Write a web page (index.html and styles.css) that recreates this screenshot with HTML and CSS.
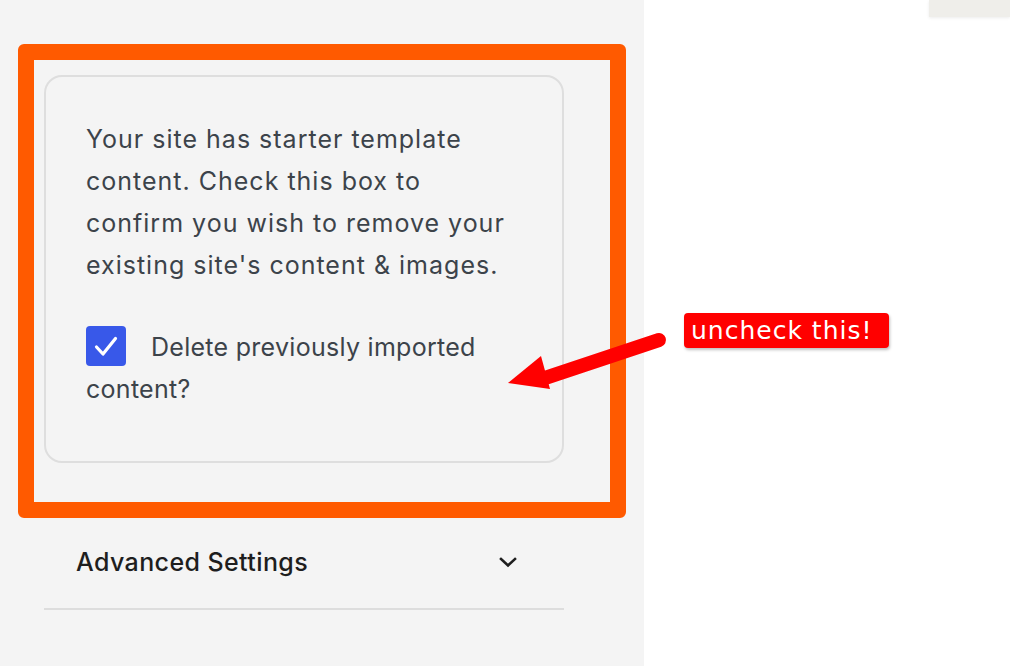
FILE: index.html
```html
<!DOCTYPE html>
<html>
<head>
<meta charset="utf-8">
<link rel="stylesheet" href="styles.css">
</head>
<body>
<div class="page">
  <aside class="sidebar">
    <div class="card">
      <p class="card-text">Your site has starter template content. Check this box to confirm you wish to remove your existing site's content &amp; images.</p>
      <label class="check-row"><span class="checkbox"><svg viewBox="0 0 40 40" width="40" height="40"><path d="M10.5 21 L17 28 L29.5 12.5" fill="none" stroke="#fff" stroke-width="3.2" stroke-linecap="round" stroke-linejoin="round"/></svg></span>Delete previously imported content?</label>
    </div>
    <div class="advanced">
      <span class="advanced-title">Advanced Settings</span>
      <svg class="chevron" viewBox="0 0 24 24" width="24" height="24"><path d="M5 9 L12 15.5 L19 9" fill="none" stroke="#1e1e1e" stroke-width="2.6" stroke-linecap="square"/></svg>
    </div>
  </aside>
  <main class="main">
    <div class="top-chip"></div>
  </main>
  <div class="frame"></div>
  <svg class="arrow" width="1010" height="666" viewBox="0 0 1010 666">
    <line x1="659" y1="340" x2="545" y2="378" stroke="#ff0000" stroke-width="14" stroke-linecap="round"/>
    <polygon points="508,383 541,356 550,389" fill="#ff0000"/>
  </svg>
  <div class="callout">uncheck this!</div>
</div>
</body>
</html>
```
FILE: styles.css
```css
html, body {
  margin: 0;
  padding: 0;
}
body {
  width: 1010px;
  height: 666px;
  overflow: hidden;
  background: #ffffff;
  font-family: Inter, "Noto Sans", "Liberation Sans", sans-serif;
}
.page {
  position: relative;
  display: flex;
  width: 1010px;
  height: 666px;
}
.sidebar {
  width: 644px;
  flex: none;
  background: #f4f4f4;
  padding: 75px 80px 0 44px;
  box-sizing: border-box;
}
.card {
  width: 520px;
  height: 388px;
  box-sizing: border-box;
  border: 2px solid #dedede;
  border-radius: 18px;
  padding: 41px 40px 0 40px;
}
.card-text {
  margin: 0;
  font-size: 25px;
  line-height: 42px;
  color: #3c434a;
  letter-spacing: 1px;
}
.check-row {
  display: block;
  margin-top: 40px;
  font-size: 25px;
  line-height: 42px;
  color: #3c434a;
  letter-spacing: 0.28px;
}
.checkbox {
  display: inline-block;
  width: 40px;
  height: 40px;
  background: #3858e9;
  border-radius: 4px;
  vertical-align: top;
  margin-right: 25px;
}
.checkbox svg {
  display: block;
}
.advanced {
  margin-top: 53px;
  width: 520px;
  height: 94px;
  box-sizing: border-box;
  border-bottom: 2px solid #dddddd;
  display: flex;
  align-items: center;
  justify-content: space-between;
  padding: 0 44px 0 32px;
}
.advanced-title {
  font-size: 25px;
  font-weight: 500;
  color: #1e1e1e;
  letter-spacing: 0.4px;
}
.chevron {
  display: block;
}
.main {
  flex: 1;
  position: relative;
}
.top-chip {
  position: absolute;
  top: 0;
  right: 0;
  width: 81px;
  height: 17px;
  background: #efeeea;
  box-shadow: 0 1px 3px rgba(0,0,0,0.08);
}
.frame {
  position: absolute;
  left: 18px;
  top: 44px;
  width: 608px;
  height: 474px;
  box-sizing: border-box;
  border: 16px solid #ff5a00;
  border-radius: 6px;
}
.arrow {
  position: absolute;
  left: 0;
  top: 0;
  pointer-events: none;
}
.callout {
  position: absolute;
  left: 684px;
  top: 313px;
  height: 35px;
  padding: 0 17px 0 7px;
  background: #ff0000;
  color: #ffffff;
  border-radius: 4px;
  font-family: "DejaVu Sans", sans-serif;
  font-size: 25px;
  letter-spacing: 1px;
  line-height: 35px;
  box-shadow: 1px 2px 3px rgba(0,0,0,0.25);
  white-space: nowrap;
}
```
